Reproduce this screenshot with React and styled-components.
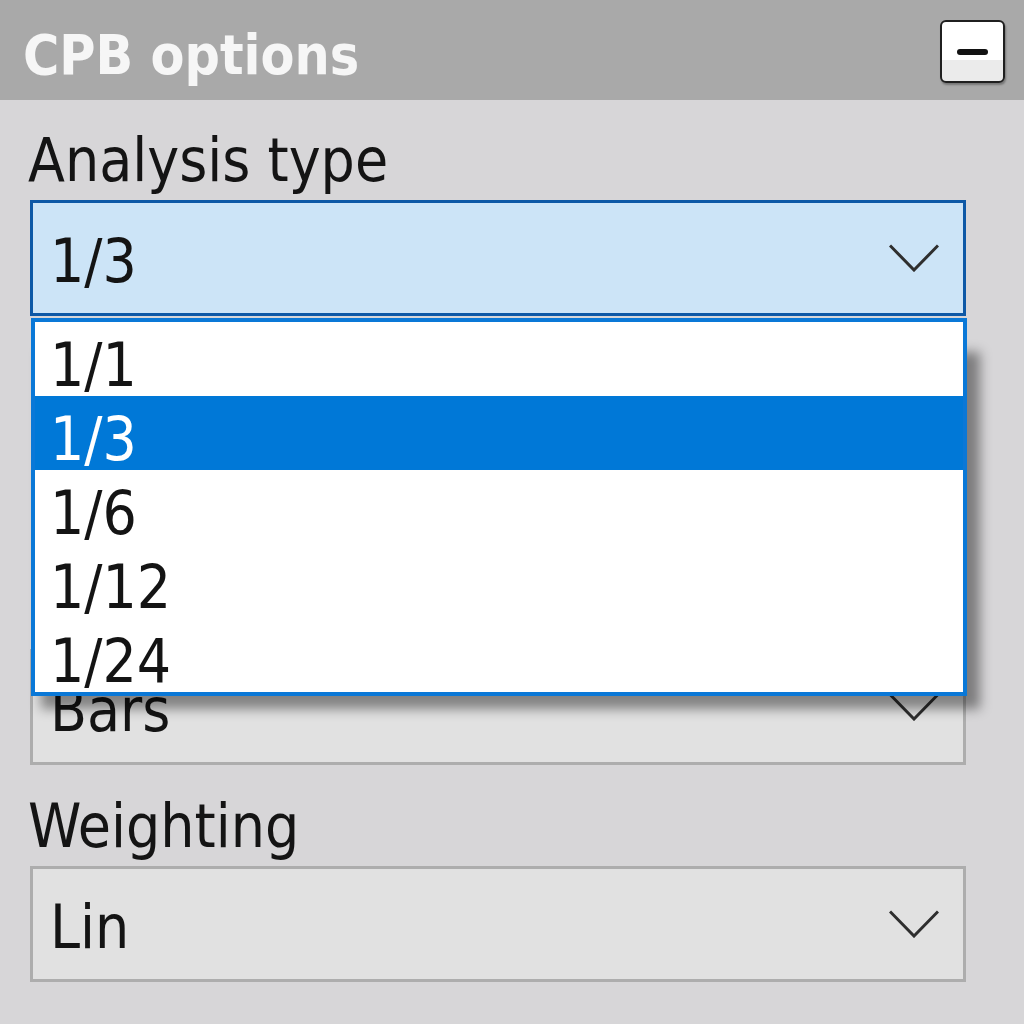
import React from "react";
import styled, { createGlobalStyle } from "styled-components";

const Global = createGlobalStyle`
  html, body {
    margin: 0;
    padding: 0;
    width: 1024px;
    height: 1024px;
    overflow: hidden;
    background: #d7d6d8;
  }
  body {
    font-family: "DejaVu Sans Condensed", "DejaVu Sans", sans-serif;
    font-stretch: condensed;
  }
`;

const Panel = styled.section`
  width: 1024px;
  height: 1024px;
  background: #d7d6d8;
  display: flex;
  flex-direction: column;
`;

const Header = styled.header`
  height: 100px;
  flex: none;
  background: #a9a9a9;
  display: flex;
  justify-content: space-between;
  align-items: flex-start;
  padding: 0 19px 0 23px;
  box-sizing: border-box;
`;

const Title = styled.h2`
  margin: 23px 0 0;
  font-size: 55px;
  line-height: 64px;
  font-weight: bold;
  color: #f6f6f6;
`;

const CollapseButton = styled.button`
  width: 65px;
  height: 63px;
  margin-top: 20px;
  padding: 0;
  border: 2px solid #1f1f1f;
  border-radius: 6px;
  background: linear-gradient(#ffffff 0 64%, #ebebeb 64% 100%);
  box-shadow: 1px 2px 2px rgba(0, 0, 0, 0.3);
  display: flex;
  align-items: center;
  justify-content: center;
`;

const MinusBar = styled.span`
  width: 31px;
  height: 6px;
  border-radius: 3px;
  background: #121212;
`;

const Body = styled.div`
  padding: 25px 58px 40px 30px;
  display: flex;
  flex-direction: column;
`;

const Group = styled.div`
  display: flex;
  flex-direction: column;
  gap: 5px;
  margin-top: ${(p) => p.$spacing || 0}px;
  position: relative;
`;

const Label = styled.label`
  margin-left: -2px;
  font-size: 60px;
  line-height: 70px;
  color: #141414;
`;

const Select = styled.div`
  height: 116px;
  box-sizing: border-box;
  border: 3px solid ${(p) => (p.$open ? "#0d58a6" : "#adadad")};
  background: ${(p) => (p.$open ? "#cce4f7" : "#e1e1e1")};
  display: flex;
  align-items: center;
  justify-content: space-between;
  padding: 6px 24px 0 17px;
  font-size: 60px;
  line-height: 70px;
  color: #141414;
`;

const Chevron = () => (
  <svg width="50" height="28" viewBox="0 0 50 28" style={{ marginTop: "-6px" }}>
    <polyline
      points="1,1.5 25,26 49,1.5"
      fill="none"
      stroke="#2e2e2e"
      strokeWidth="3"
    />
  </svg>
);

const DropdownLayer = styled.div`
  position: absolute;
  left: 1px;
  right: -1px;
  top: calc(100% + 2px);
  z-index: 5;

  &::before {
    content: "";
    position: absolute;
    top: 34px;
    left: 10px;
    right: -13px;
    bottom: -13px;
    background: rgba(0, 0, 0, 0.42);
    filter: blur(6px);
    z-index: -1;
  }
`;

const OptionList = styled.ul`
  position: relative;
  margin: 0;
  padding: 0;
  list-style: none;
  background: #ffffff;
  border: 4px solid #0a78d7;
`;

const Option = styled.li`
  height: 74px;
  box-sizing: border-box;
  padding: 10px 0 0 15px;
  font-size: 60px;
  line-height: 66px;
  color: ${(p) => (p.$selected ? "#ffffff" : "#141414")};
  background: ${(p) => (p.$selected ? "#0078d7" : "transparent")};
  white-space: nowrap;
`;

const options = ["1/1", "1/3", "1/6", "1/12", "1/24"];

export default function App() {
  return (
    <>
      <Global />
      <Panel>
        <Header>
          <Title>CPB options</Title>
          <CollapseButton aria-label="Collapse">
            <MinusBar />
          </CollapseButton>
        </Header>
        <Body>
          <Group>
            <Label>Analysis type</Label>
            <Select $open>
              <span>1/3</span>
              <Chevron />
            </Select>
            <DropdownLayer>
              <OptionList>
                {options.map((o) => (
                  <Option key={o} $selected={o === "1/3"}>
                    {o}
                  </Option>
                ))}
              </OptionList>
            </DropdownLayer>
          </Group>
          <Group $spacing={333}>
            <Select>
              <span>Bars</span>
              <Chevron />
            </Select>
          </Group>
          <Group $spacing={26}>
            <Label>Weighting</Label>
            <Select>
              <span>Lin</span>
              <Chevron />
            </Select>
          </Group>
        </Body>
      </Panel>
    </>
  );
}
